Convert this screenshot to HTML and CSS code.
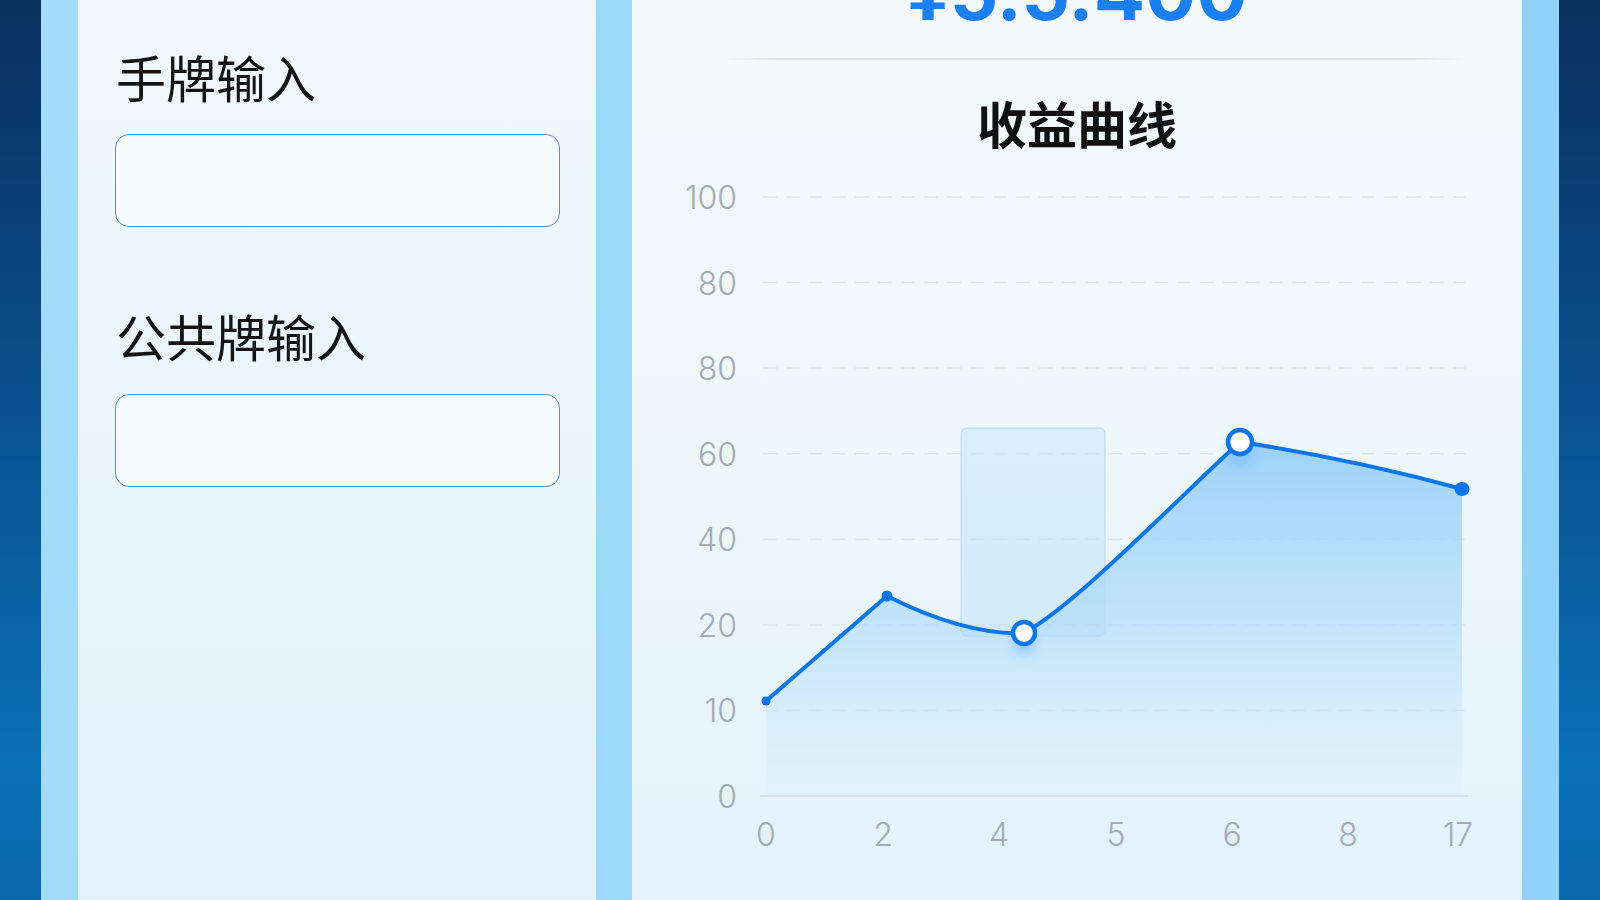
FILE: index.html
```html
<!DOCTYPE html>
<html lang="zh-CN">
<head>
<meta charset="utf-8">
<title>收益曲线</title>
<link rel="stylesheet" href="styles.css">
</head>
<body>
<div class="frame">
  <section class="card card-left">
    <label class="field-label">手牌输入</label>
    <div class="input-box"></div>
    <label class="field-label second">公共牌输入</label>
    <div class="input-box"></div>
  </section>
  <section class="card card-right">
    <div class="amount">¥5.5.400</div>
    <div class="divider"></div>
    <h2 class="chart-title">收益曲线</h2>
    <svg class="chart" width="890" height="700" viewBox="0 0 890 700" xmlns="http://www.w3.org/2000/svg">
      <defs>
        <linearGradient id="areaGrad" gradientUnits="userSpaceOnUse" x1="0" y1="270" x2="0" y2="640">
          <stop offset="0" stop-color="#8ecaf8" stop-opacity="0.85"/>
          <stop offset="0.5" stop-color="#addaf9" stop-opacity="0.65"/>
          <stop offset="1" stop-color="#d6edfb" stop-opacity="0.2"/>
        </linearGradient>
        <filter id="glow" x="-80%" y="-80%" width="260%" height="260%">
          <feGaussianBlur stdDeviation="6"/>
        </filter>
      </defs>
      <g class="grid">
        <line x1="131" y1="28" x2="833" y2="28"/>
        <line x1="131" y1="113.6" x2="833" y2="113.6"/>
        <line x1="131" y1="199.1" x2="833" y2="199.1"/>
        <line x1="131" y1="284.7" x2="833" y2="284.7"/>
        <line x1="131" y1="370.3" x2="833" y2="370.3"/>
        <line x1="131" y1="455.9" x2="833" y2="455.9"/>
        <line x1="131" y1="541.4" x2="833" y2="541.4"/>
      </g>
      <line class="axis" x1="128" y1="627" x2="836" y2="627"/>
      <rect class="highlight" x="329" y="259" width="144" height="208" rx="6"/>
      <path class="area" d="M134,532 L255,427 C300,450 350,466 392,464 C445,435 545,330 608,273 Q720,290 830,320 L830,627 L134,627 Z"/>
      <circle class="glow" cx="392" cy="474" r="11" filter="url(#glow)"/>
      <circle class="glow" cx="608" cy="284" r="12" filter="url(#glow)"/>
      <path class="line" d="M134,532 L255,427 C300,450 350,466 392,464 C445,435 545,330 608,273 Q720,290 830,320"/>
      <circle class="dot" cx="134" cy="532" r="4.5"/>
      <circle class="dot" cx="255" cy="427" r="5.5"/>
      <circle class="ring" cx="392" cy="464" r="11"/>
      <circle class="ring" cx="608" cy="273" r="12"/>
      <ellipse class="dot" cx="830" cy="320" rx="7.5" ry="7"/>
      <g class="ylabels">
        <text x="105" y="40">100</text>
        <text x="105" y="125.6">80</text>
        <text x="105" y="211.1">80</text>
        <text x="105" y="296.7">60</text>
        <text x="105" y="382.3">40</text>
        <text x="105" y="467.9">20</text>
        <text x="105" y="553.4">10</text>
        <text x="105" y="639">0</text>
      </g>
      <g class="xlabels">
        <text x="134" y="677">0</text>
        <text x="251" y="677">2</text>
        <text x="367" y="677">4</text>
        <text x="484" y="677">5</text>
        <text x="600" y="677">6</text>
        <text x="716" y="677">8</text>
        <text x="826" y="677">17</text>
      </g>
    </svg>
  </section>
</div>
</body>
</html>
```
FILE: styles.css
```css
* { box-sizing: border-box; }

html, body {
  margin: 0;
  padding: 0;
  width: 1600px;
  height: 900px;
  overflow: hidden;
}

body {
  display: flex;
  background:
    linear-gradient(180deg, #0b2f5e 0%, #0a4d8a 40%, #0a70b8 85%, #0b68ad 100%);
  font-family: "Noto Sans CJK SC", "Noto Sans", sans-serif;
}

.frame {
  flex: 1;
  margin: 0 41px;
  padding: 0 37px;
  display: flex;
  gap: 36px;
  background: linear-gradient(90deg, #a3dbfa 0%, #8fd1f8 100%);
  height: 900px;
}

.card {
  height: 900px;
  overflow: hidden;
}

.card-left {
  width: 518px;
  padding: 44px 36px 0 37px;
  background: linear-gradient(180deg, #f1f8fb 0%, #ebf6fb 40%, #e0f1fa 100%);
  display: flex;
  flex-direction: column;
}

.field-label {
  display: block;
  font-size: 50px;
  font-weight: 400;
  line-height: 64px;
  color: #141414;
  padding-left: 1px;
  margin: 0 0 26px;
}

.field-label.second {
  margin-top: 76px;
  margin-bottom: 27px;
}

.input-box {
  height: 93px;
  border: 1.5px solid #4f90cf;
  border-radius: 14px;
  background: rgba(248, 251, 252, 0.8);
}

.card-right {
  flex: 1;
  display: flex;
  flex-direction: column;
  align-items: stretch;
  background: linear-gradient(180deg, #f3f9fb 0%, #eef7fb 50%, #e2f2fb 100%);
}

.amount {
  font-family: Inter, "Liberation Sans", sans-serif;
  font-weight: 700;
  font-size: 76px;
  line-height: 76px;
  margin-top: -46px;
  color: #1a7ff0;
  text-align: center;
  letter-spacing: 0;
}

.divider {
  height: 2px;
  margin: 28px 58px 0 92px;
  background: linear-gradient(90deg, rgba(200,212,222,0) 0%, #d9e1e7 8%, #d9e1e7 92%, rgba(200,212,222,0) 100%);
}

.chart-title {
  margin: 30px 0 0;
  text-align: center;
  font-size: 50px;
  font-weight: 700;
  line-height: 64px;
  color: #111;
}

.chart {
  display: block;
  margin-top: 15px;
}

.grid line {
  stroke: #d9e3ea;
  stroke-width: 1.5;
  stroke-dasharray: 14 9;
  opacity: 0.8;
}

.axis {
  stroke: #d3dde5;
  stroke-width: 2;
}

.highlight {
  fill: rgba(190, 225, 248, 0.45);
  stroke: rgba(175, 214, 242, 0.6);
  stroke-width: 1.5;
}

.area {
  fill: url(#areaGrad);
}

.line {
  fill: none;
  stroke: #0b76e8;
  stroke-width: 4;
  stroke-linejoin: round;
  stroke-linecap: round;
}

.glow {
  fill: #6ab6f6;
  opacity: 0.6;
}

.dot {
  fill: #0b76e8;
}

.ring {
  fill: #ffffff;
  stroke: #0b76e8;
  stroke-width: 4.5;
}

.ylabels text {
  font-family: Inter, "Liberation Sans", sans-serif;
  font-weight: 300;
  font-size: 32px;
  fill: #a3abb6;
  text-anchor: end;
}

.xlabels text {
  font-family: Inter, "Liberation Sans", sans-serif;
  font-weight: 300;
  font-size: 32px;
  fill: #a3abb6;
  text-anchor: middle;
}
```
